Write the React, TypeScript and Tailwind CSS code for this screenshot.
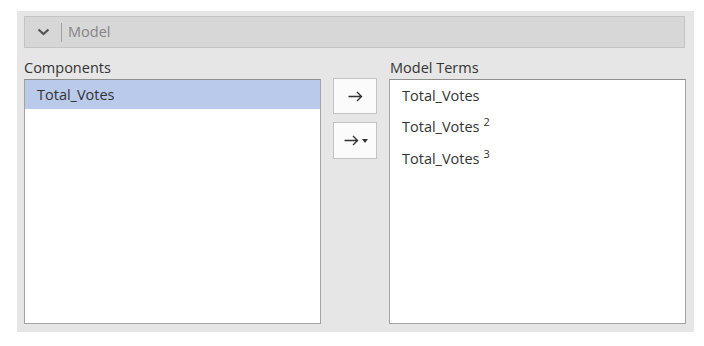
import React from "react";

function Arrow() {
  return (
    <svg width="15" height="11" viewBox="0 0 15 11">
      <path d="M0.5 5.5 H13.5 M9 1 L13.5 5.5 L9 10" fill="none" stroke="#333" strokeWidth="1.4" strokeLinejoin="miter" />
    </svg>
  );
}

export default function App() {
  const font = { fontFamily: '"Open Sans", "Noto Sans", sans-serif' };
  return (
    <div className="w-[704px] h-[346px] bg-white pt-[11px] pl-[17px]" style={font}>
      <div className="w-[677px] h-[321px] bg-[#e6e6e6] px-[7px] pt-[5px] flex flex-col">
        <div className="h-[32px] w-[661px] bg-[#d7d7d7] border border-[#c4c4c4] flex items-center">
          <svg width="13" height="8" viewBox="0 0 13 8" className="ml-[12px]">
            <path d="M1.5 1.5 L6.5 6 L11.5 1.5" fill="none" stroke="#555" strokeWidth="2.2" />
          </svg>
          <div className="ml-[11px] w-px h-[19px] bg-[#a0a0a0]" />
          <span className="ml-[6px] text-[14.5px] leading-[20px] text-[#858585]">Model</span>
        </div>
        <div className="flex mt-[10px]">
          <div className="flex flex-col w-[297px]">
            <div className="text-[14.5px] leading-[20px] text-[#333]">Components</div>
            <div className="h-[245px] bg-white border border-[#a3a3a3] border-t-[#8f8f8f] mt-[1px]">
              <div className="h-[29px] bg-[#b9caeb] text-[14.5px] leading-[20px] text-[#333] flex items-center pl-[12px]">Total_Votes</div>
            </div>
          </div>
          <div className="flex flex-col w-[68px] items-center pt-[20px] gap-[8px]">
            <div className="w-[44px] h-[36px] bg-[#fbfbfb] border border-[#c2c2c2] flex items-center justify-center">
              <Arrow />
            </div>
            <div className="w-[44px] h-[37px] bg-[#fbfbfb] border border-[#c2c2c2] flex items-center justify-center gap-[3px] pl-[2px]">
              <Arrow />
              <svg width="6" height="4" viewBox="0 0 6 4">
                <path d="M0 0 H6 L3 4 Z" fill="#333" />
              </svg>
            </div>
          </div>
          <div className="flex flex-col w-[297px]">
            <div className="text-[14.5px] leading-[20px] text-[#333] pl-[1px]">Model Terms</div>
            <div className="h-[245px] bg-white border border-[#a3a3a3] border-t-[#8f8f8f] mt-[1px] pl-[12px] text-[14.5px] leading-[31px] text-[#333]">
              <div>Total_Votes</div>
              <div>
                Total_Votes<span className="relative -top-[6px] text-[11px] ml-[4px]">2</span>
              </div>
              <div>
                Total_Votes<span className="relative -top-[6px] text-[11px] ml-[4px]">3</span>
              </div>
            </div>
          </div>
        </div>
      </div>
    </div>
  );
}
